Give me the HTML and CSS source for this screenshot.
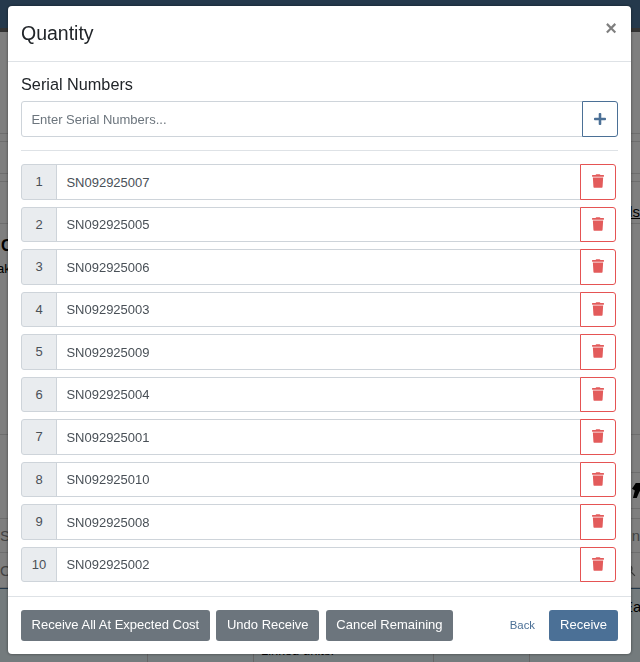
FILE: index.html
```html
<!DOCTYPE html>
<html lang="en">
<head>
    <meta charset="UTF-8">
    <title>Quantity</title>
    <link rel="stylesheet" href="styles.css">
</head>
<body>

    <!-- page behind the dialog -->
    <div class="page">
        <div class="topbar"></div>
        <div class="strip s1"></div>
        <div class="strip s2"></div>
        <div class="strip s3"></div>
        <div class="strip s4"></div>
        <div class="strip s5"><span></span><a class="link">ls</a></div>
        <div class="strip s6">
            <b class="heading">C</b>
            <span class="sub">ak</span>
        </div>
        <div class="strip s7">
            <div class="side">
                <div class="side_a"></div>
                <div class="side_b">
                    <svg viewBox="0 0 16 16"><path d="M4 0h12l-3 6-5 3-3 7H1l2-8-3-2z"/></svg>
                </div>
                <div class="side_c"></div>
            </div>
        </div>
        <div class="strip s9"><span class="faint">S</span><span class="faint">Un</span></div>
        <div class="strip s10">
            <span class="faint">O</span>
            <svg class="search" viewBox="0 0 16 16"><path d="M6.5 1a5.5 5.5 0 1 0 3.4 9.8l4.4 4.4 1-1-4.4-4.4A5.5 5.5 0 0 0 6.5 1zm0 1.5a4 4 0 1 1 0 8 4 4 0 0 1 0-8z"/></svg>
        </div>
        <div class="tablehead">
            <span class="c1"></span>
            <span class="c2"></span>
            <span class="c3">Linked units:</span>
            <span class="c4"></span>
            <span class="c5">Ea</span>
        </div>
    </div>
    <div class="backdrop"></div>

    <div class="modal">
        <div class="modal_head">
            <h5>Quantity</h5>
            <span class="close">&times;</span>
        </div>
        <div class="modal_body">
            <label class="field_label">Serial Numbers</label>
            <div class="group">
                <input class="field" type="text" placeholder="Enter Serial Numbers...">
                <button class="btn_add">
                    <svg viewBox="0 0 448 512"><path d="M416 208H272V64c0-17.67-14.33-32-32-32h-32c-17.67 0-32 14.33-32 32v144H32c-17.67 0-32 14.33-32 32v32c0 17.67 14.33 32 32 32h144v144c0 17.67 14.33 32 32 32h32c17.67 0 32-14.33 32-32V304h144c17.67 0 32-14.33 32-32v-32c0-17.67-14.33-32-32-32z"/></svg>
                </button>
            </div>
            <hr>
            <div id="rows"></div>
        </div>
        <div class="modal_foot">
            <button class="btn grey">Receive All At Expected Cost</button>
            <button class="btn grey">Undo Receive</button>
            <button class="btn grey">Cancel Remaining</button>
            <a class="back">Back</a>
            <button class="btn blue">Receive</button>
        </div>
    </div>

    <script>
        var serials = ["SN092925007","SN092925005","SN092925006","SN092925003","SN092925009",
                       "SN092925004","SN092925001","SN092925010","SN092925008","SN092925002"];
        var html = "";
        for(var i = 0 ; i < serials.length; i++){
            html += '<div class="group row">'
                 +  '<span class="num">' + (i + 1) + '</span>'
                 +  '<input class="field val" type="text" value="' + serials[i] + '">'
                 +  '<button class="btn_del"><svg viewBox="0 0 448 512"><path d="M432 32H312l-9.4-18.7A24 24 0 0 0 281.1 0H166.8a23.72 23.72 0 0 0-21.4 13.3L136 32H16A16 16 0 0 0 0 48v32a16 16 0 0 0 16 16h416a16 16 0 0 0 16-16V48a16 16 0 0 0-16-16zM53.2 467a48 48 0 0 0 47.9 45h245.8a48 48 0 0 0 47.9-45L416 128H32z"/></svg></button>'
                 +  '</div>';
        }
        document.getElementById("rows").innerHTML = html;
    </script>
</body>
</html>
```

FILE: styles.css
```css
* {
    padding: 0;
    margin: 0;
    box-sizing: border-box;
}
html, body {
    height: 662px;
    overflow: hidden;
}
body {
    font-family: "Liberation Sans", Arial, sans-serif;
    font-size: 13px;
    color: #212529;
    background-color: #fff;
}

/* page behind */
.page {
    height: 662px;
    display: flex;
    flex-direction: column;
}
.topbar {
    height: 32px;
    background-color: #4a7399;
    border-bottom: 4px solid #666;
}
.strip {
    flex: none;
    display: flex;
    justify-content: space-between;
    align-items: center;
    border-bottom: 1px solid #ddd;
    font-size: 15px;
}
.s1 { height: 102px; }
.s2 { height: 8px; }
.s3 { height: 32px; }
.s4 { height: 8px; }
.s5 {
    height: 42px;
    align-items: flex-start;
    padding-top: 21px;
}
.s6 {
    height: 211px;
    flex-direction: column;
    justify-content: flex-start;
    align-items: flex-start;
    padding-top: 12px;
}
.s7 {
    height: 84px;
    justify-content: flex-end;
    align-items: stretch;
}
.s9 { height: 34px; }
.s10 { height: 35px; }
.link {
    color: #000;
    text-decoration: underline;
}
.heading {
    margin-left: 1px;
    font-size: 16px;
    line-height: 20px;
    color: #000;
}
.sub {
    margin-top: 4px;
    margin-left: -3px;
    font-size: 13px;
    line-height: 18px;
    color: #000;
}
.side {
    width: 9px;
    display: flex;
    flex-direction: column;
}
.side_a {
    height: 38px;
    border-bottom: 1px solid #ddd;
}
.side_b {
    height: 36px;
    padding: 10px 0 0 1px;
    border-bottom: 1px solid #ddd;
}
.side_b svg {
    display: block;
    width: 15px;
    height: 15px;
}
.side_c {
    flex: 1;
}
.faint {
    color: #888;
}
.search {
    width: 14px;
    height: 14px;
    margin-right: 4px;
    fill: #777;
}
.tablehead {
    flex: 1;
    display: flex;
    background-color: #e8f7fa;
    border-top: 1px solid #4a7399;
}
.tablehead span {
    flex: none;
    border-right: 1px solid #ccc;
    padding-top: 54px;
    color: #000;
    white-space: nowrap;
    font-size: 13px;
}
.tablehead .c1 { width: 148px; }
.tablehead .c2 { width: 106px; }
.tablehead .c3 { width: 180px; padding-left: 7px; }
.tablehead .c4 { width: 96px; }
.tablehead .c5 { width: 110px; border: 0; padding: 9px 0 0 93px; font-size: 15px; }
.backdrop {
    position: fixed;
    left: 0;
    top: 0;
    width: 100%;
    height: 100%;
    background-color: rgba(0, 0, 0, .5);
}

/* dialog */
.modal {
    position: fixed;
    left: 8px;
    top: 6px;
    width: 623px;
    height: 648px;
    background-color: #fff;
    border-radius: 4px;
    box-shadow: 0 0 3px rgba(0, 0, 0, .5);
    display: flex;
    flex-direction: column;
}
.modal_head {
    height: 56px;
    padding: 13px 14px 0 13px;
    border-bottom: 1px solid #dee2e6;
    display: flex;
    justify-content: space-between;
}
.modal_head h5 {
    font-size: 19.5px;
    font-weight: 400;
    line-height: 29px;
}
.close {
    font-size: 20px;
    font-weight: 700;
    line-height: 18px;
    color: #000;
    opacity: .5;
}
.modal_body {
    padding: 13px 13px 0;
    height: 535px;
    border-bottom: 1px solid #dee2e6;
}
.field_label {
    display: block;
    font-size: 16.25px;
    line-height: 19.25px;
    margin-bottom: 7px;
}
.group {
    display: flex;
    height: 35.5px;
}
.field {
    flex: 1;
    min-width: 0;
    height: 100%;
    padding: 0 9.4px;
    font-family: inherit;
    font-size: 13px;
    color: #495057;
    background-color: #fff;
    border: 1px solid #ced4da;
    border-radius: 3px 0 0 3px;
    outline: none;
}
.field::placeholder {
    color: #6c757d;
}
.btn_add {
    width: 36px;
    height: 100%;
    margin-left: -1px;
    background-color: #fff;
    border: 1px solid #4b7096;
    border-radius: 0 3px 3px 0;
    display: flex;
    align-items: center;
    justify-content: center;
}
.btn_add svg {
    width: 12px;
    height: 14px;
    margin-right: 1px;
    fill: #4b7096;
}
hr {
    border: 0;
    border-top: 1px solid #dee2e6;
    margin: 13px 0 13.5px;
}
.row {
    margin-bottom: 7px;
    width: 595px;
}
.num {
    width: 36px;
    flex: none;
    display: flex;
    align-items: center;
    justify-content: center;
    padding-bottom: 1px;
    color: #495057;
    background-color: #e9ecef;
    border: 1px solid #ced4da;
    border-radius: 3px 0 0 3px;
}
.val {
    margin-left: -1px;
    border-radius: 0;
}
.btn_del {
    width: 36px;
    flex: none;
    height: 100%;
    margin-left: -1px;
    background-color: #fff;
    border: 1px solid #e55353;
    border-radius: 0 3px 3px 0;
    display: flex;
    align-items: center;
    justify-content: center;
}
.btn_del svg {
    width: 12px;
    height: 14px;
    margin-right: 1px;
    margin-bottom: 2px;
    fill: #e35b5b;
}
.modal_foot {
    flex: 1;
    padding: 13px 13px 0;
    display: flex;
    align-items: flex-start;
}
.btn {
    height: 31px;
    padding: 0 10.6px 2px;
    font-family: inherit;
    font-size: 13px;
    color: #fff;
    border: 0;
    border-radius: 3px;
    margin-right: 6.5px;
}
.grey {
    background-color: #6c757d;
}
.blue {
    margin: 0;
    padding: 0 11px 2px;
    background-color: #4b7096;
}
.back {
    margin-left: auto;
    margin-right: 14px;
    font-size: 11.4px;
    line-height: 31px;
    color: #4b7096;
}
```
